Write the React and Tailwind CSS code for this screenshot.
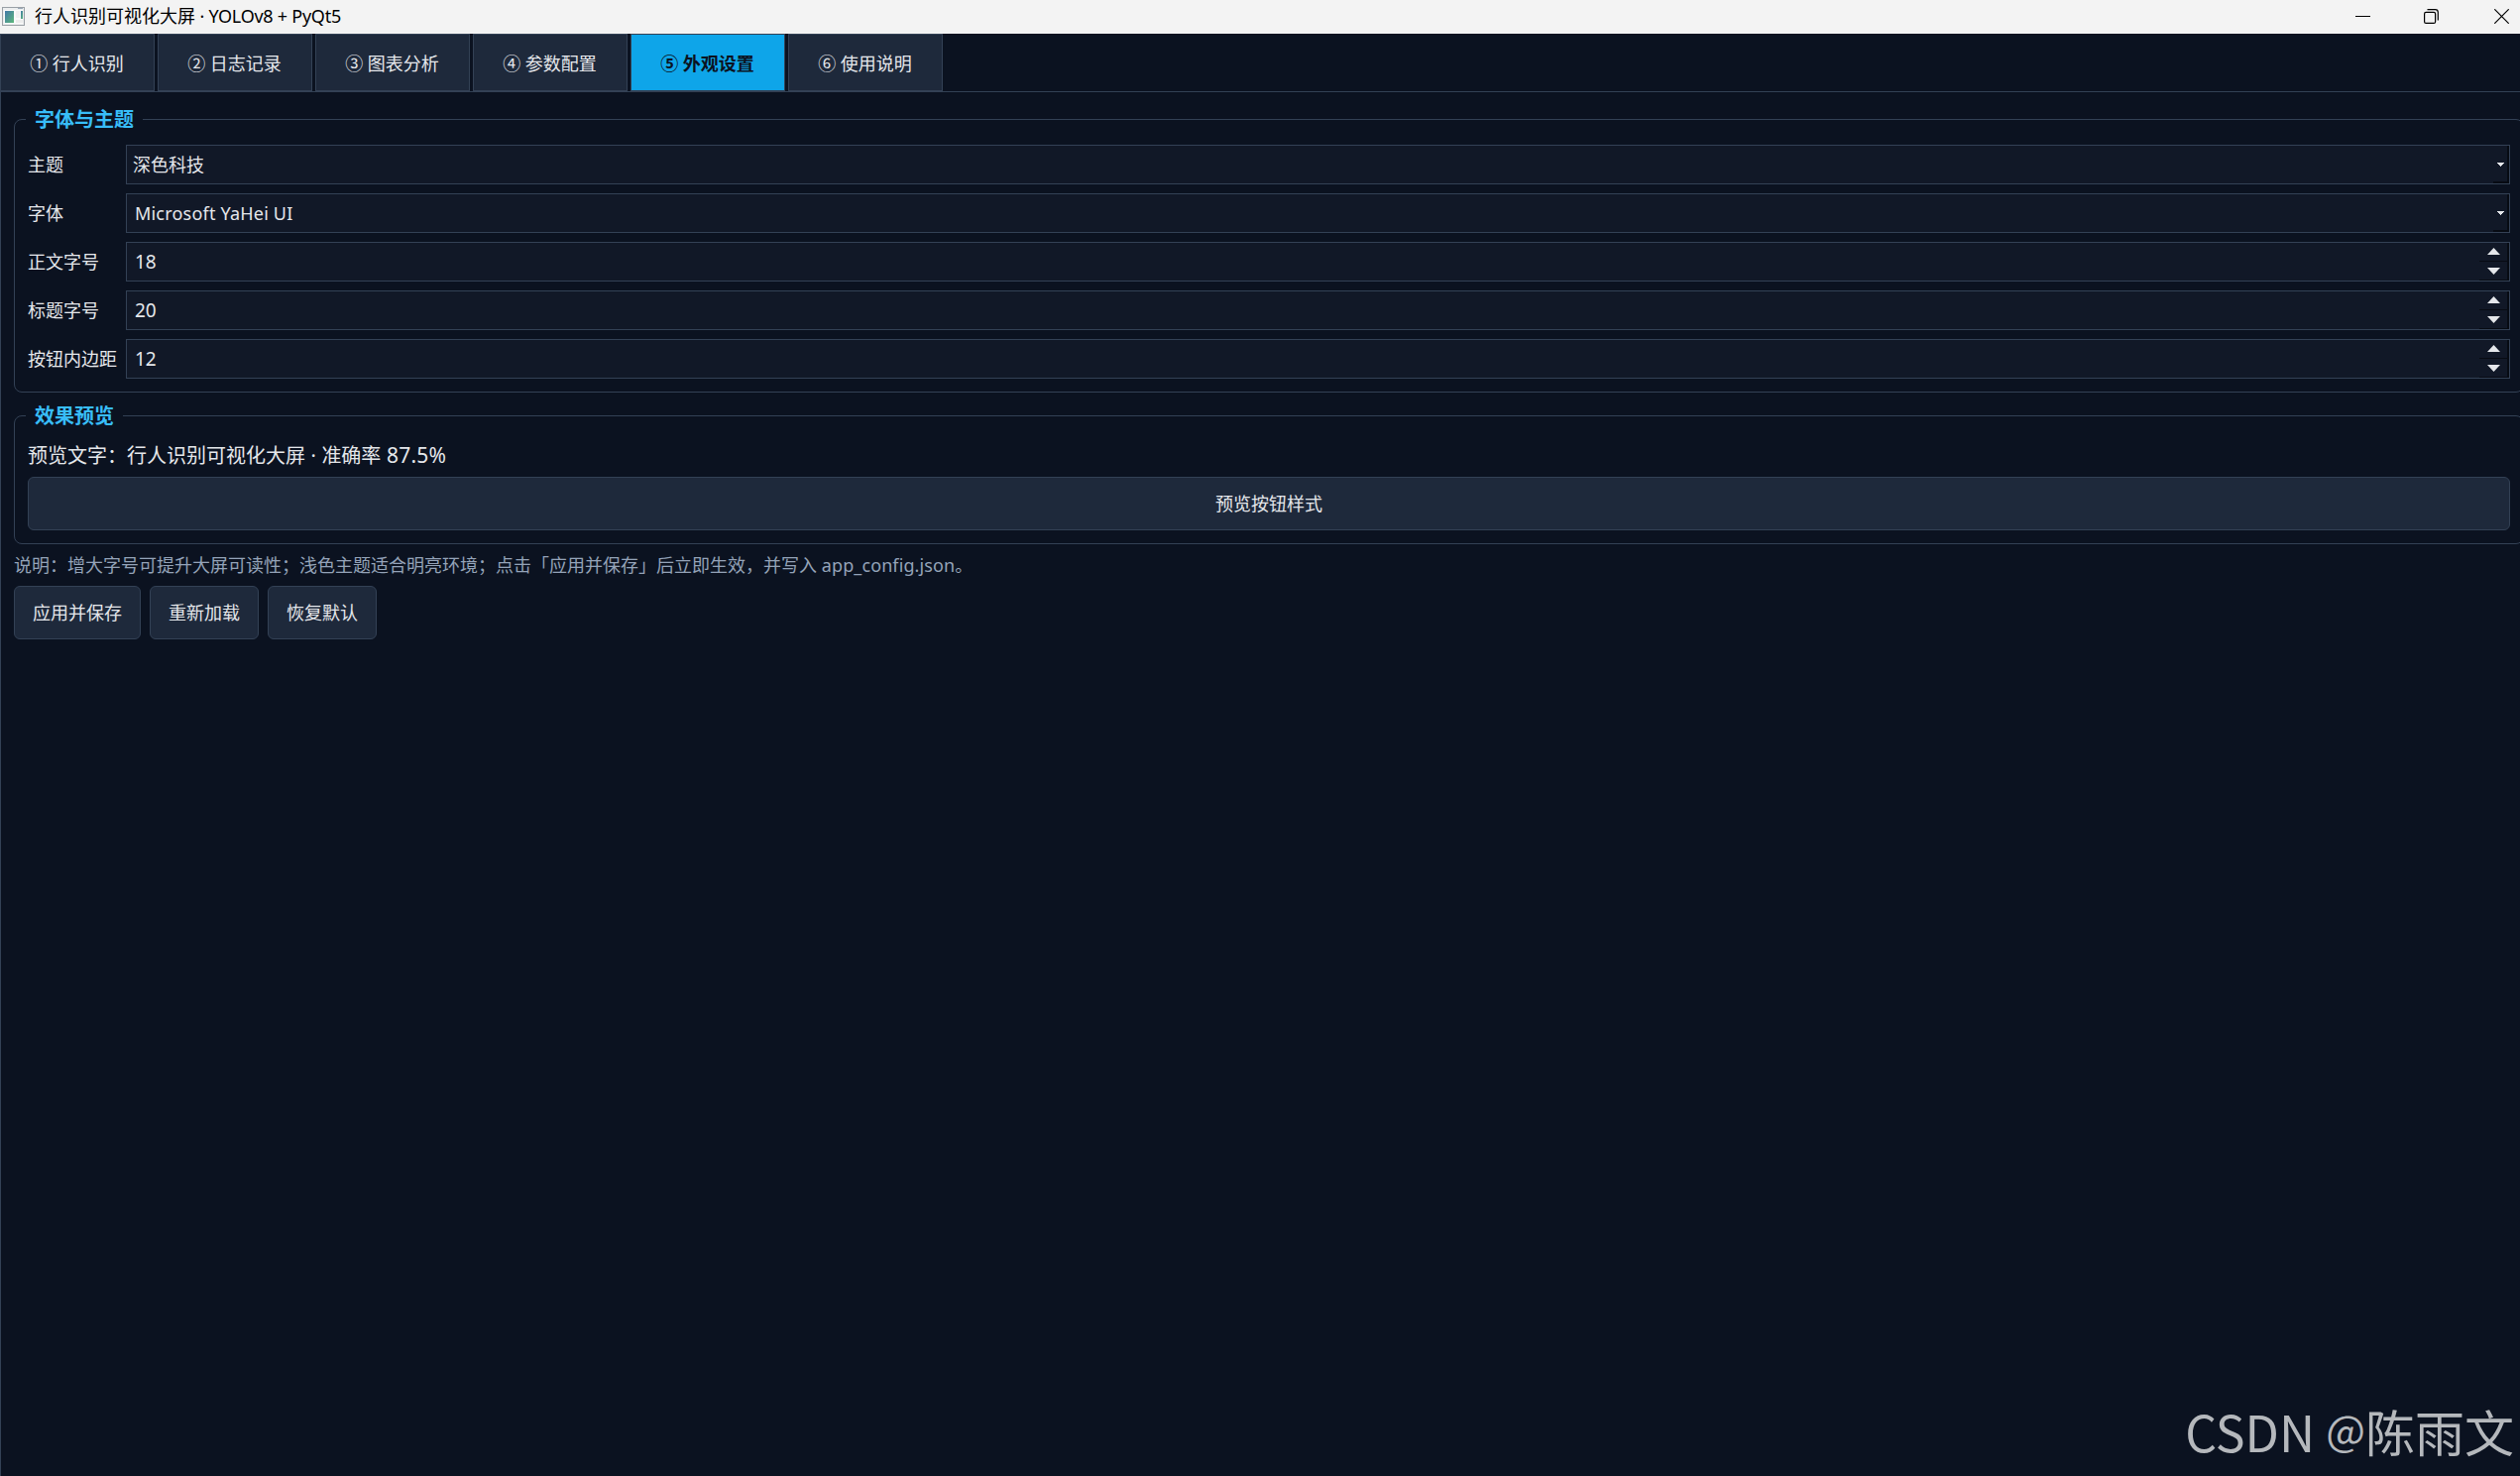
import { useState } from "react";

const tabs = [
  "① 行人识别",
  "② 日志记录",
  "③ 图表分析",
  "④ 参数配置",
  "⑤ 外观设置",
  "⑥ 使用说明",
];

const AppIcon = () => (
  <svg width="24" height="20" viewBox="0 0 24 20" shapeRendering="crispEdges">
    <defs>
      <linearGradient id="icon-pane" x1="0" y1="0" x2="1" y2="1">
        <stop offset="0" stopColor="#4278a8" />
        <stop offset="1" stopColor="#5cb87a" />
      </linearGradient>
    </defs>
    <rect x="0.5" y="0.5" width="22" height="18" rx="1" fill="#eceeef" stroke="#9aa0a6" />
    <path d="M16 1.5h5" stroke="#9aa8b8" />
    <rect x="2" y="3" width="19" height="14" fill="#fafafa" />
    <rect x="3" y="4" width="9" height="12" fill="url(#icon-pane)" />
    <rect x="14" y="4" width="4" height="7" fill="#f0f0f0" />
    <rect x="19" y="4" width="2" height="8" fill="url(#icon-pane)" />
    <rect x="14" y="13" width="7" height="3" fill="#ececec" />
  </svg>
);

const TitleBar = () => (
  <header className="flex h-[34px] shrink-0 items-center bg-[#f3f3f3] pl-0.5 text-black">
    <AppIcon />
    <h1 className="ml-[9px] flex-1 pb-0.5 text-[18px] leading-[32px]">
      行人识别可视化大屏<span className="tracking-[-0.25px]"> · YOLOv8 + PyQt5</span>
    </h1>
    <div className="flex h-4 items-start pr-[11px]">
      <svg width="15" height="15" viewBox="0 0 15 15">
        <path d="M0 7.5h15" stroke="#000" />
      </svg>
      <svg className="ml-[54px]" width="15" height="15" viewBox="0 0 15 15" fill="none" stroke="#000" strokeWidth="1.2">
        <rect x="0.6" y="3.4" width="11" height="11" rx="1.5" />
        <path d="M3.5 0.7H11.5a2.8 2.8 0 0 1 2.8 2.8V11.5" />
      </svg>
      <svg className="ml-14" width="15" height="15" viewBox="0 0 15 15">
        <path d="M0.3 0.3l14.4 14.4M14.7 0.3L0.3 14.7" stroke="#000" strokeWidth="1.2" />
      </svg>
    </div>
  </header>
);

const GroupBox = ({ title, className, children }) => (
  <section className={`w-[2532px] rounded-lg border border-[#334155] px-[13px] pb-[13px] ${className}`}>
    <h2 className="-ml-0.5 -mt-[14px] w-fit bg-[#0b1220] px-[9px] text-[20px] font-bold leading-[28px] text-[#38bdf8]">
      {title}
    </h2>
    {children}
  </section>
);

const Row = ({ label, children }) => (
  <div className="flex h-10 items-center">
    <label className="w-[99px] text-[18px]">{label}</label>
    <div className="flex h-10 w-[2405px] items-center border border-[#334155] bg-[#111827] text-[18px]">
      {children}
    </div>
  </div>
);

const Combo = ({ value, className }) => (
  <>
    <span className={`flex-1 ${className}`}>{value}</span>
    <span className="flex h-[38px] w-4 items-center justify-center border-b-2 border-r-2 border-[#070b13] pt-0.5">
      <svg width="7" height="4" viewBox="0 0 7 4" shapeRendering="crispEdges">
        <path d="M0 0h7v1H6v1H5v1H4v1H3V3H2V2H1V1H0z" fill="#e5e7eb" />
      </svg>
    </span>
  </>
);

const SpinBox = ({ initial }) => {
  const [value, setValue] = useState(initial);
  return (
    <>
      <span className="flex-1 pl-2 text-[19px]">{value}</span>
      <span className="flex w-[30px] flex-col">
        <button
          className="flex h-[19px] items-center justify-center border-b border-r-2 border-[#070b13] pb-px"
          onClick={() => setValue(value + 1)}
        >
          <svg width="13" height="7" viewBox="0 0 13 7">
            <path d="M0 7h13L6.5 0z" fill="#e5e7eb" />
          </svg>
        </button>
        <button
          className="flex h-[19px] items-center justify-center border-b border-r-2 border-[#070b13] pt-px"
          onClick={() => setValue(value - 1)}
        >
          <svg width="13" height="7" viewBox="0 0 13 7">
            <path d="M0 0h13L6.5 7z" fill="#e5e7eb" />
          </svg>
        </button>
      </span>
    </>
  );
};

const Button = ({ className, children }) => (
  <button
    className={`h-[54px] rounded-md border border-[#334155] bg-[#1e293b] text-[18px] ${className}`}
  >
    {children}
  </button>
);

export default function App() {
  const [active, setActive] = useState(4);

  return (
    <div className="relative flex h-[1489px] w-[2542px] flex-col overflow-hidden bg-[#0b1220] font-['Noto_Sans','Noto_Sans_CJK_SC',sans-serif] text-[#e5e7eb]">
      <TitleBar />

      {/* Tabs */}
      <nav className="flex h-[58px] shrink-0 gap-[3px]">
        {tabs.map((tab, i) => (
          <button
            key={tab}
            onClick={() => setActive(i)}
            className={`h-[58px] w-[156px] border border-[#334155] pr-px pt-0.5 text-[18px] ${
              i === active ? "bg-[#0ea5e9] font-bold text-[#0b1220]" : "bg-[#1e293b]"
            }`}
          >
            {tab}
          </button>
        ))}
      </nav>

      <main className="flex-1 border-l border-t border-[#334155] pl-[13px]">
        <GroupBox title="字体与主题" className="mt-[27px]">
          <div className="mt-[11px] flex flex-col gap-[9px]">
            <Row label="主题">
              <Combo value="深色科技" className="pl-[6px]" />
            </Row>
            <Row label="字体">
              <Combo value="Microsoft YaHei UI" className="pl-2 tracking-[0.2px]" />
            </Row>
            <Row label="正文字号">
              <SpinBox initial={18} />
            </Row>
            <Row label="标题字号">
              <SpinBox initial={20} />
            </Row>
            <Row label="按钮内边距">
              <SpinBox initial={12} />
            </Row>
          </div>
        </GroupBox>

        <GroupBox title="效果预览" className="mt-[23px]">
          <p className="mt-[11px] h-9 text-[20px] leading-[28px]">
            预览文字：行人识别可视化大屏<span className="tracking-[0.2px]"> · </span>准确率
            <span className="text-[21px] tracking-[0.2px]"> 87.5%</span>
          </p>
          <Button className="w-[2504px]">预览按钮样式</Button>
        </GroupBox>

        <p className="mt-[7px] h-[35px] text-[18px] leading-[28px] text-[#94a3b8]">
          说明：增大字号可提升大屏可读性；浅色主题适合明亮环境；点击「应用并保存」后立即生效，并写入
          <span className="tracking-[0.1px]"> app_config.json</span>。
        </p>
        <div className="flex gap-[9px]">
          <Button className="w-32">应用并保存</Button>
          <Button className="w-[110px]">重新加载</Button>
          <Button className="w-[110px]">恢复默认</Button>
        </div>
      </main>

      {/* Watermark */}
      <div className="absolute bottom-2 right-1.5 whitespace-nowrap font-['Noto_Sans_CJK_SC',sans-serif] text-[50px] text-[#b5b8bc]">
        CSDN <span className="align-[6px] text-[42px]">@</span>陈雨文
      </div>
    </div>
  );
}
